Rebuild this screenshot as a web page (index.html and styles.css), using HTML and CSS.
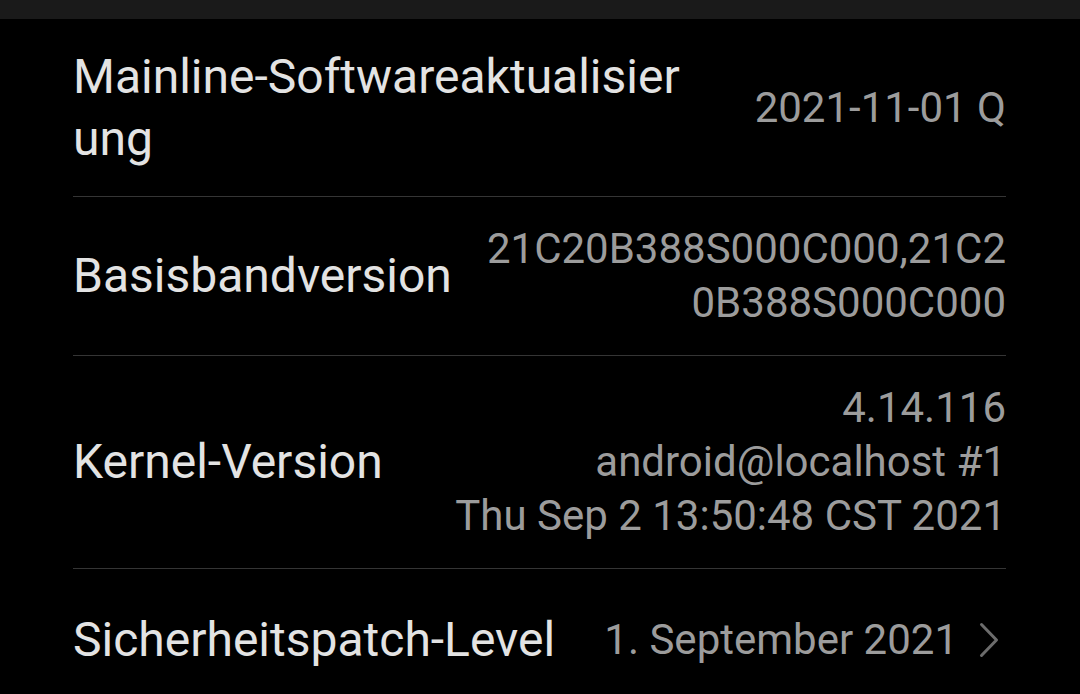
FILE: index.html
```html
<!DOCTYPE html>
<html lang="de">
<head>
    <meta charset="UTF-8">
    <meta name="viewport" content="width=device-width, initial-scale=1.0">
    <title>Über das Telefon</title>
    <link rel="stylesheet" href="styles.css">
</head>
<body>
    <div class="status-bar"></div>

    <div class="info-list">
        <div class="info-row first">
            <div class="info-label">Mainline-Softwareaktualisier<br>ung</div>
            <div class="info-value">2021-11-01 Q</div>
        </div>

        <div class="info-row">
            <div class="info-label">Basisbandversion</div>
            <div class="info-value">21C20B388S000C000,21C2<br>0B388S000C000</div>
        </div>

        <div class="info-row">
            <div class="info-label">Kernel-Version</div>
            <div class="info-value">4.14.116<br>android@localhost #1<br>Thu Sep 2 13:50:48 CST 2021</div>
        </div>

        <div class="info-row last">
            <div class="info-label">Sicherheitspatch-Level</div>
            <div class="info-value with-arrow">
                <span>1. September 2021</span>
                <svg class="chevron" width="20" height="36" viewBox="0 0 20 36">
                    <path d="M2.5 2.5 L17.5 18 L2.5 33.5" fill="none" stroke="#6c6c6c" stroke-width="3" stroke-linecap="round" stroke-linejoin="round"/>
                </svg>
            </div>
        </div>
    </div>
</body>
</html>
```

FILE: styles.css
```css
body {
    margin: 0;
    background-color: #000;
    font-family: Roboto, "Noto Sans", sans-serif;
    overflow: hidden;
}

.status-bar {
    height: 19px;
    background-color: #1a1a1a;
}

.info-list {
    padding: 0 74px 0 73px;
}

.info-row {
    display: flex;
    justify-content: space-between;
    align-items: center;
    gap: 30px;
    padding: 25px 0;
    border-bottom: 1px solid #353535;
}

.info-row.first {
    height: 178px;
    padding: 0;
    box-sizing: border-box;
}

.info-row.last {
    min-height: 142px;
    padding: 0;
    border-bottom: none;
}

.info-label {
    color: #e3e3e3;
    font-size: 48px;
    line-height: 62px;
    white-space: nowrap;
}

.info-value {
    color: #9c9c9c;
    font-size: 42px;
    line-height: 54px;
    text-align: right;
    white-space: nowrap;
}

.with-arrow {
    display: flex;
    align-items: center;
    gap: 21px;
}

.chevron {
    margin-right: 7px;
}
```
